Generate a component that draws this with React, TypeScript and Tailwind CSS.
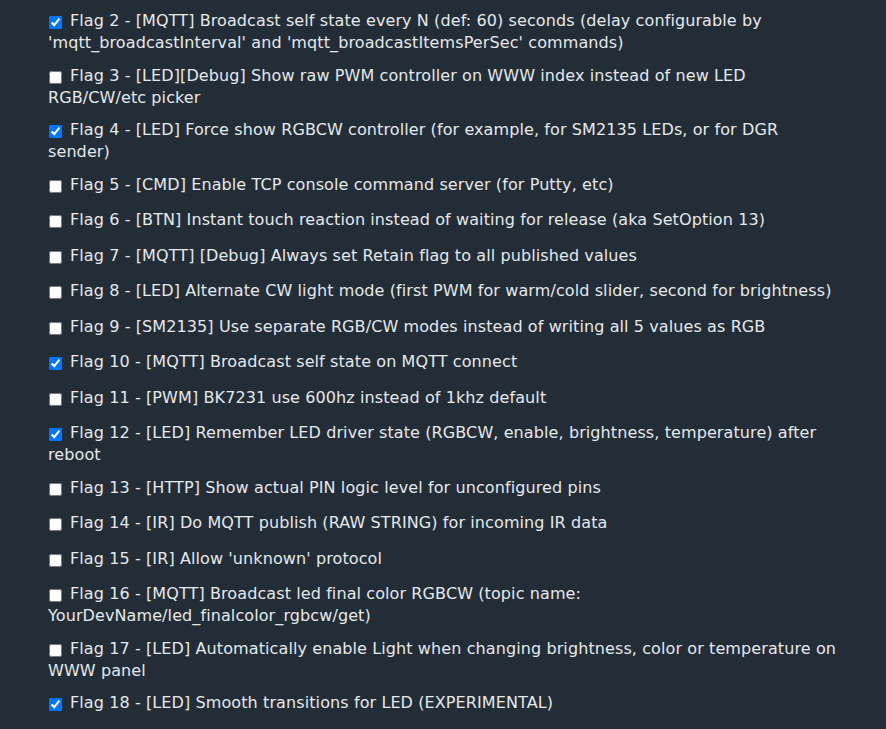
const flags: { id: number; text: string; checked: boolean }[] = [
  { id: 2, checked: true, text: "[MQTT] Broadcast self state every N (def: 60) seconds (delay configurable by 'mqtt_broadcastInterval' and 'mqtt_broadcastItemsPerSec' commands)" },
  { id: 3, checked: false, text: '[LED][Debug] Show raw PWM controller on WWW index instead of new LED RGB/CW/etc picker' },
  { id: 4, checked: true, text: '[LED] Force show RGBCW controller (for example, for SM2135 LEDs, or for DGR sender)' },
  { id: 5, checked: false, text: '[CMD] Enable TCP console command server (for Putty, etc)' },
  { id: 6, checked: false, text: '[BTN] Instant touch reaction instead of waiting for release (aka SetOption 13)' },
  { id: 7, checked: false, text: '[MQTT] [Debug] Always set Retain flag to all published values' },
  { id: 8, checked: false, text: '[LED] Alternate CW light mode (first PWM for warm/cold slider, second for brightness)' },
  { id: 9, checked: false, text: '[SM2135] Use separate RGB/CW modes instead of writing all 5 values as RGB' },
  { id: 10, checked: true, text: '[MQTT] Broadcast self state on MQTT connect' },
  { id: 11, checked: false, text: '[PWM] BK7231 use 600hz instead of 1khz default' },
  { id: 12, checked: true, text: '[LED] Remember LED driver state (RGBCW, enable, brightness, temperature) after reboot' },
  { id: 13, checked: false, text: '[HTTP] Show actual PIN logic level for unconfigured pins' },
  { id: 14, checked: false, text: '[IR] Do MQTT publish (RAW STRING) for incoming IR data' },
  { id: 15, checked: false, text: "[IR] Allow 'unknown' protocol" },
  { id: 16, checked: false, text: '[MQTT] Broadcast led final color RGBCW (topic name: YourDevName/led_finalcolor_rgbcw/get)' },
  { id: 17, checked: false, text: '[LED] Automatically enable Light when changing brightness, color or temperature on WWW panel' },
  { id: 18, checked: true, text: '[LED] Smooth transitions for LED (EXPERIMENTAL)' },
];

export default function App() {
  return (
    <div className="min-h-[729px] bg-[#222d38] text-[#e6e8ea] font-['DejaVu_Sans',Verdana,sans-serif] text-[16px] tracking-[0.1px] leading-[19px] pl-[48px] pr-[46px] pt-[11px] pb-[20px]">
      <div className="flex flex-col gap-[13.5px]">
        {flags.map(f => (
          <div key={f.id}>
            {/* checkbox hangs a little below the baseline, making the first line taller */}
            <input
              type="checkbox"
              id={`flag${f.id}`}
              defaultChecked={f.checked}
              className="ml-[1px] mr-[8px] mb-[4px] w-[13px] h-[13px] align-[-3px]"
            />
            <label htmlFor={`flag${f.id}`}>
              Flag {f.id} - {f.text}
            </label>
          </div>
        ))}
      </div>
    </div>
  );
}
